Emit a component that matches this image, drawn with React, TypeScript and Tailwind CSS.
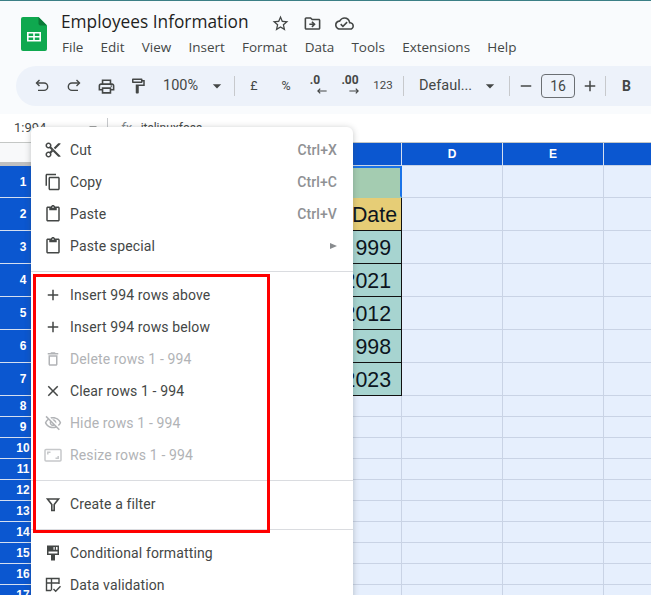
import type { ReactNode } from "react";
import {
  MdAdd,
  MdArrowDropDown,
  MdClose,
  MdContentCut,
  MdOutlineCloudDone,
  MdOutlineContentCopy,
  MdOutlineContentPaste,
  MdOutlineDeleteOutline,
  MdOutlineDriveFileMove,
  MdOutlineFormatPaint,
  MdOutlinePrint,
  MdOutlineVisibilityOff,
  MdRemove,
  MdStarBorder,
} from "react-icons/md";

const menus = ["File", "Edit", "View", "Insert", "Format", "Data", "Tools", "Extensions", "Help"];

const rows = [
  { n: 1, h: "h-[32px]" },
  { n: 2, h: "h-[33px]" },
  { n: 3, h: "h-[33px]" },
  { n: 4, h: "h-[33px]" },
  { n: 5, h: "h-[33px]" },
  { n: 6, h: "h-[33px]" },
  { n: 7, h: "h-[33px]" },
  { n: 8, h: "h-[21px]" },
  { n: 9, h: "h-[21px]" },
  { n: 10, h: "h-[21px]" },
  { n: 11, h: "h-[21px]" },
  { n: 12, h: "h-[21px]" },
  { n: 13, h: "h-[21px]" },
  { n: 14, h: "h-[21px]" },
  { n: 15, h: "h-[21px]" },
  { n: 16, h: "h-[21px]" },
  { n: 17, h: "h-[21px]" },
];

// only the part of column C that shows past the context menu
const cellC: Record<number, { text: string; cls: string }> = {
  1: { text: "", cls: "bg-[#a4ccb1] border-t-2 border-r-2 border-b-2 border-t-[#1a73e8] border-r-[#1a73e8] border-b-[#a4ccb1]" },
  2: { text: "Date", cls: "bg-[#e6cd76] border-r border-b border-[#111] pr-[4px] pt-[3px]" },
  3: { text: "999", cls: "bg-[#a7d4d0] border-r border-b border-[#111] pr-[10px] pt-[3px]" },
  4: { text: "2021", cls: "bg-[#a7d4d0] border-r border-b border-[#111] pr-[10px] pt-[3px]" },
  5: { text: "2012", cls: "bg-[#a7d4d0] border-r border-b border-[#111] pr-[10px] pt-[3px]" },
  6: { text: "998", cls: "bg-[#a7d4d0] border-r border-b border-[#111] pr-[10px] pt-[3px]" },
  7: { text: "2023", cls: "bg-[#a7d4d0] border-r border-b border-[#111] pr-[10px] pt-[3px]" },
};

function Logo() {
  return (
    <svg width="26" height="34" viewBox="0 0 26 34" className="shrink-0 mt-[1px]">
      <path d="M2 0h15.500L26 8.500V32a2 2 0 0 1-2 2H2a2 2 0 0 1-2-2V2a2 2 0 0 1 2-2z" fill="#0fa84f" />
      <path d="M17.500 0L26 8.500h-6.500a2 2 0 0 1-2-2z" fill="#0a7a38" />
      <path d="M6 15h14v9.500H6z" fill="#fff" />
      <path d="M7.600 16.600h4.600v2.300H7.600zM13.800 16.600h4.600v2.300h-4.600zM7.600 20.500h4.600v2.400H7.600zM13.800 20.500h4.600v2.400h-4.600z" fill="#0fa84f" />
    </svg>
  );
}

function UndoIcon({ flip }: { flip?: boolean }) {
  return (
    <svg width="14" height="14" viewBox="0 0 14 14" fill="none" stroke="#444746" strokeWidth="1.400" className={flip ? "-scale-x-100" : ""}>
      <path d="M4.500 1L1.500 4l3 3" />
      <path d="M1.800 4h7.200a3.700 3.700 0 0 1 0 7.400H3" />
    </svg>
  );
}

function Divider() {
  return <div className="w-px h-[20px] bg-[#c7c9cc] shrink-0" />;
}

function ToolIcon({ children }: { children: ReactNode }) {
  return <div className="w-[32px] flex justify-center items-center text-[#444746] shrink-0">{children}</div>;
}

function Toolbar() {
  return (
    <div className="ml-[16px] h-[40px] bg-[#edf2fa] rounded-l-[20px] flex items-center pl-[10px] text-[#444746] font-['Roboto',sans-serif]">
      <ToolIcon><UndoIcon /></ToolIcon>
      <ToolIcon><UndoIcon flip /></ToolIcon>
      <ToolIcon><MdOutlinePrint size={19} /></ToolIcon>
      <ToolIcon><MdOutlineFormatPaint size={18} /></ToolIcon>
      <span className="ml-[9px] w-[44px] text-[14.500px]">100%</span>
      <MdArrowDropDown size={20} />
      <div className="ml-[7px]"><Divider /></div>
      <div className="w-[32px] ml-[3px] text-center text-[12.500px]">£</div>
      <div className="w-[32px] text-center text-[12.500px]">%</div>
      <div className="w-[32px] h-[20px] flex flex-col items-center leading-none text-[12px] font-bold">
        <span className="h-[11px] -mt-[2px] mr-[6px]">.0</span>
        <svg width="11" height="6" viewBox="0 0 12 7" className="mt-[3px] ml-[7px]"><path d="M12 3.500H2M4.500 0.800L1.800 3.500l2.700 2.700" fill="none" stroke="#444746" strokeWidth="1.400" /></svg>
      </div>
      <div className="w-[32px] h-[20px] flex flex-col items-center leading-none text-[12px] font-bold">
        <span className="h-[11px] -mt-[2px]">.00</span>
        <svg width="11" height="6" viewBox="0 0 12 7" className="mt-[3px] ml-[8px]"><path d="M0 3.500h10M7.500 0.800l2.700 2.700-2.700 2.700" fill="none" stroke="#444746" strokeWidth="1.400" /></svg>
      </div>
      <div className="w-[34px] text-center text-[11.500px]">123</div>
      <div className="ml-[3px]"><Divider /></div>
      <span className="ml-[15px] w-[58px] text-[14.500px] whitespace-nowrap">Defaul...</span>
      <MdArrowDropDown size={20} className="ml-[3px]" />
      <div className="ml-[9px]"><Divider /></div>
      <MdRemove size={18} className="ml-[7px]" />
      <div className="ml-[6px] w-[34px] h-[24px] border border-[#6b6f73] rounded-[4px] flex items-center justify-center text-[14px] text-[#444746]">16</div>
      <MdAdd size={18} className="ml-[6px]" />
      <div className="ml-[6px]"><Divider /></div>
      <span className="ml-[16px] text-[14px] font-bold">B</span>
    </div>
  );
}

function Grid() {
  return (
    <div className="font-['Liberation_Sans',sans-serif]">
      <div className="flex h-[23px]">
        <div className="w-[46px] bg-[#f8f9fa] flex flex-col justify-end shrink-0">
          <div className="h-[4px] bg-[#c0c0c0]" />
        </div>
        <div className="w-[355px] bg-[#0b57d0] border-b border-[#c7d3e6] shrink-0" />
        {["D", "E", ""].map((c, i) => (
          <div
            key={i}
            className="w-[101px] shrink-0 bg-[#0b57d0] border-l border-l-[#d5dff0] border-b border-b-[#c7d3e6] flex items-center justify-center text-white text-[12px] font-bold"
          >
            {c}
          </div>
        ))}
      </div>
      {rows.map((r) => {
        const c = cellC[r.n];
        return (
          <div key={r.n} className={`flex ${r.h}`}>
            <div className="w-[46px] shrink-0 bg-[#0b57d0] border-b border-[#d5dff0] flex items-center justify-center text-white text-[12px] font-bold">
              {r.n}
            </div>
            <div className="w-[255px] shrink-0 bg-[#e6effd]" />
            <div
              className={`w-[101px] shrink-0 flex items-center justify-end whitespace-nowrap text-[21.33px] text-[#0c1420] ${
                c ? c.cls : "bg-[#e6effd] border-b border-r border-[#c9d3e5]"
              }`}
            >
              {c?.text}
            </div>
            {[0, 1, 2].map((i) => (
              <div key={i} className="w-[101px] shrink-0 bg-[#e6effd] border-r border-b border-[#c9d3e5]" />
            ))}
          </div>
        );
      })}
    </div>
  );
}

function CondIcon() {
  return (
    <svg width="18" height="18" viewBox="0 0 18 18" fill="#444746">
      <path d="M3 1.500h12v9.500h-4v5.500H7V11H3zM4.500 7.500v2h9v-2zM9.500 3v2.800h1.200V3zM12 3v2.800h1.500V3z" fillRule="evenodd" />
    </svg>
  );
}

function ValidationIcon() {
  return (
    <svg width="18" height="18" viewBox="0 0 18 18" fill="none" stroke="#444746" strokeWidth="1.400">
      <path d="M7 14.500H2.500V2.500h12.500V8M2.500 7h12.500M7.500 2.500v12" />
      <path d="M9.500 13l2.200 2.300 4.800-5" />
    </svg>
  );
}

function ResizeIcon() {
  return (
    <svg width="18" height="18" viewBox="0 0 18 18" fill="none" stroke="#c6c8ca" strokeWidth="1.500">
      <rect x="1" y="3.500" width="16" height="11.500" rx="1" />
      <path d="M3.800 8.500V6.200h2.700M14.200 10v2.300h-2.700" />
    </svg>
  );
}

function FilterIcon() {
  return (
    <svg width="18" height="18" viewBox="0 0 18 18" fill="none" stroke="#444746" strokeWidth="1.600">
      <path d="M3.500 4h11L10.200 9.500V15.500H7.800V9.500z" />
    </svg>
  );
}

function Item({
  icon,
  label,
  shortcut,
  disabled,
  arrow,
}: {
  icon?: ReactNode;
  label: string;
  shortcut?: string;
  disabled?: boolean;
  arrow?: boolean;
}) {
  return (
    <div className={`h-[32px] flex items-center pl-[13px] pr-[16px] ${disabled ? "text-[#b1b3b6]" : "text-[#444746]"}`}>
      <div className="w-[18px] flex justify-center shrink-0">{icon}</div>
      <span className="ml-[8px] flex-1 text-[14px] tracking-[0.13px] whitespace-nowrap">{label}</span>
      {shortcut && <span className="text-[14px] font-medium tracking-[0.1px] text-[#8f9194]">{shortcut}</span>}
      {arrow && <span className="w-0 h-0 border-y-[3.500px] border-y-transparent border-l-[7px] border-l-[#888b8e]" />}
    </div>
  );
}

function Sep() {
  return <div className="mt-[9px] mb-[7px] h-px bg-[#dadce0]" />;
}

function ContextMenu() {
  return (
    <div className="absolute left-[31px] top-[127px] w-[322px] pt-[7px] bg-white rounded-t-[6px] shadow-[0_1px_6px_rgba(60,64,67,0.3)] font-['Roboto',sans-serif]">
      <Item icon={<MdContentCut size={18} />} label="Cut" shortcut="Ctrl+X" />
      <Item icon={<MdOutlineContentCopy size={18} />} label="Copy" shortcut="Ctrl+C" />
      <Item icon={<MdOutlineContentPaste size={18} />} label="Paste" shortcut="Ctrl+V" />
      <Item icon={<MdOutlineContentPaste size={18} />} label="Paste special" arrow />
      <Sep />
      <Item icon={<MdAdd size={18} />} label="Insert 994 rows above" />
      <Item icon={<MdAdd size={18} />} label="Insert 994 rows below" />
      <Item icon={<MdOutlineDeleteOutline size={18} />} label="Delete rows 1 - 994" disabled />
      <Item icon={<MdClose size={18} />} label="Clear rows 1 - 994" />
      <Item icon={<MdOutlineVisibilityOff size={18} />} label="Hide rows 1 - 994" disabled />
      <Item icon={<ResizeIcon />} label="Resize rows 1 - 994" disabled />
      <Sep />
      <Item icon={<FilterIcon />} label="Create a filter" />
      <Sep />
      <Item icon={<CondIcon />} label="Conditional formatting" />
      <Item icon={<ValidationIcon />} label="Data validation" />
    </div>
  );
}

export default function App() {
  return (
    <div className="relative w-[651px] h-[595px] overflow-hidden bg-white">
      <div className="h-[114px] bg-[#f9fbfd] border-t border-[#3b7f86]">
        <div className="flex pt-[15px] pl-[21px] h-[65px]">
          <Logo />
          <div className="ml-[14px] font-['Open_Sans',sans-serif]">
            <div className="flex items-center h-[14px]">
              <span className="text-[17.300px] text-[#1f1f1f] w-[210px] leading-none whitespace-nowrap -translate-y-px">Employees Information</span>
              <div className="flex gap-[13px] text-[#444746]">
                <MdStarBorder size={19} />
                <MdOutlineDriveFileMove size={19} />
                <MdOutlineCloudDone size={19} />
              </div>
            </div>
            <div className="flex gap-[17.200px] mt-[11px] ml-[1px] text-[13.500px] text-[#444746] leading-none whitespace-nowrap">
              {menus.map((m) => (
                <span key={m}>{m}</span>
              ))}
            </div>
          </div>
        </div>
        <Toolbar />
      </div>
      <div className="h-[29px] flex items-center border-b border-[#c4c7c5] text-[13px] text-[#444746] font-['Roboto',sans-serif]">
        <span className="ml-[14px] w-[70px]">1:994</span>
        <MdArrowDropDown size={18} />
        <div className="ml-[5px] w-px h-[20px] bg-[#c7c9cc]" />
        <span className="ml-[13px] italic text-[#80868b]">fx</span>
        <span className="ml-[9px] text-[12px]">itslinuxfoss</span>
      </div>
      <Grid />
      <ContextMenu />
      <div className="absolute left-[33px] top-[274px] w-[237px] h-[259px] border-[3px] border-[#ff0000]" />
    </div>
  );
}
